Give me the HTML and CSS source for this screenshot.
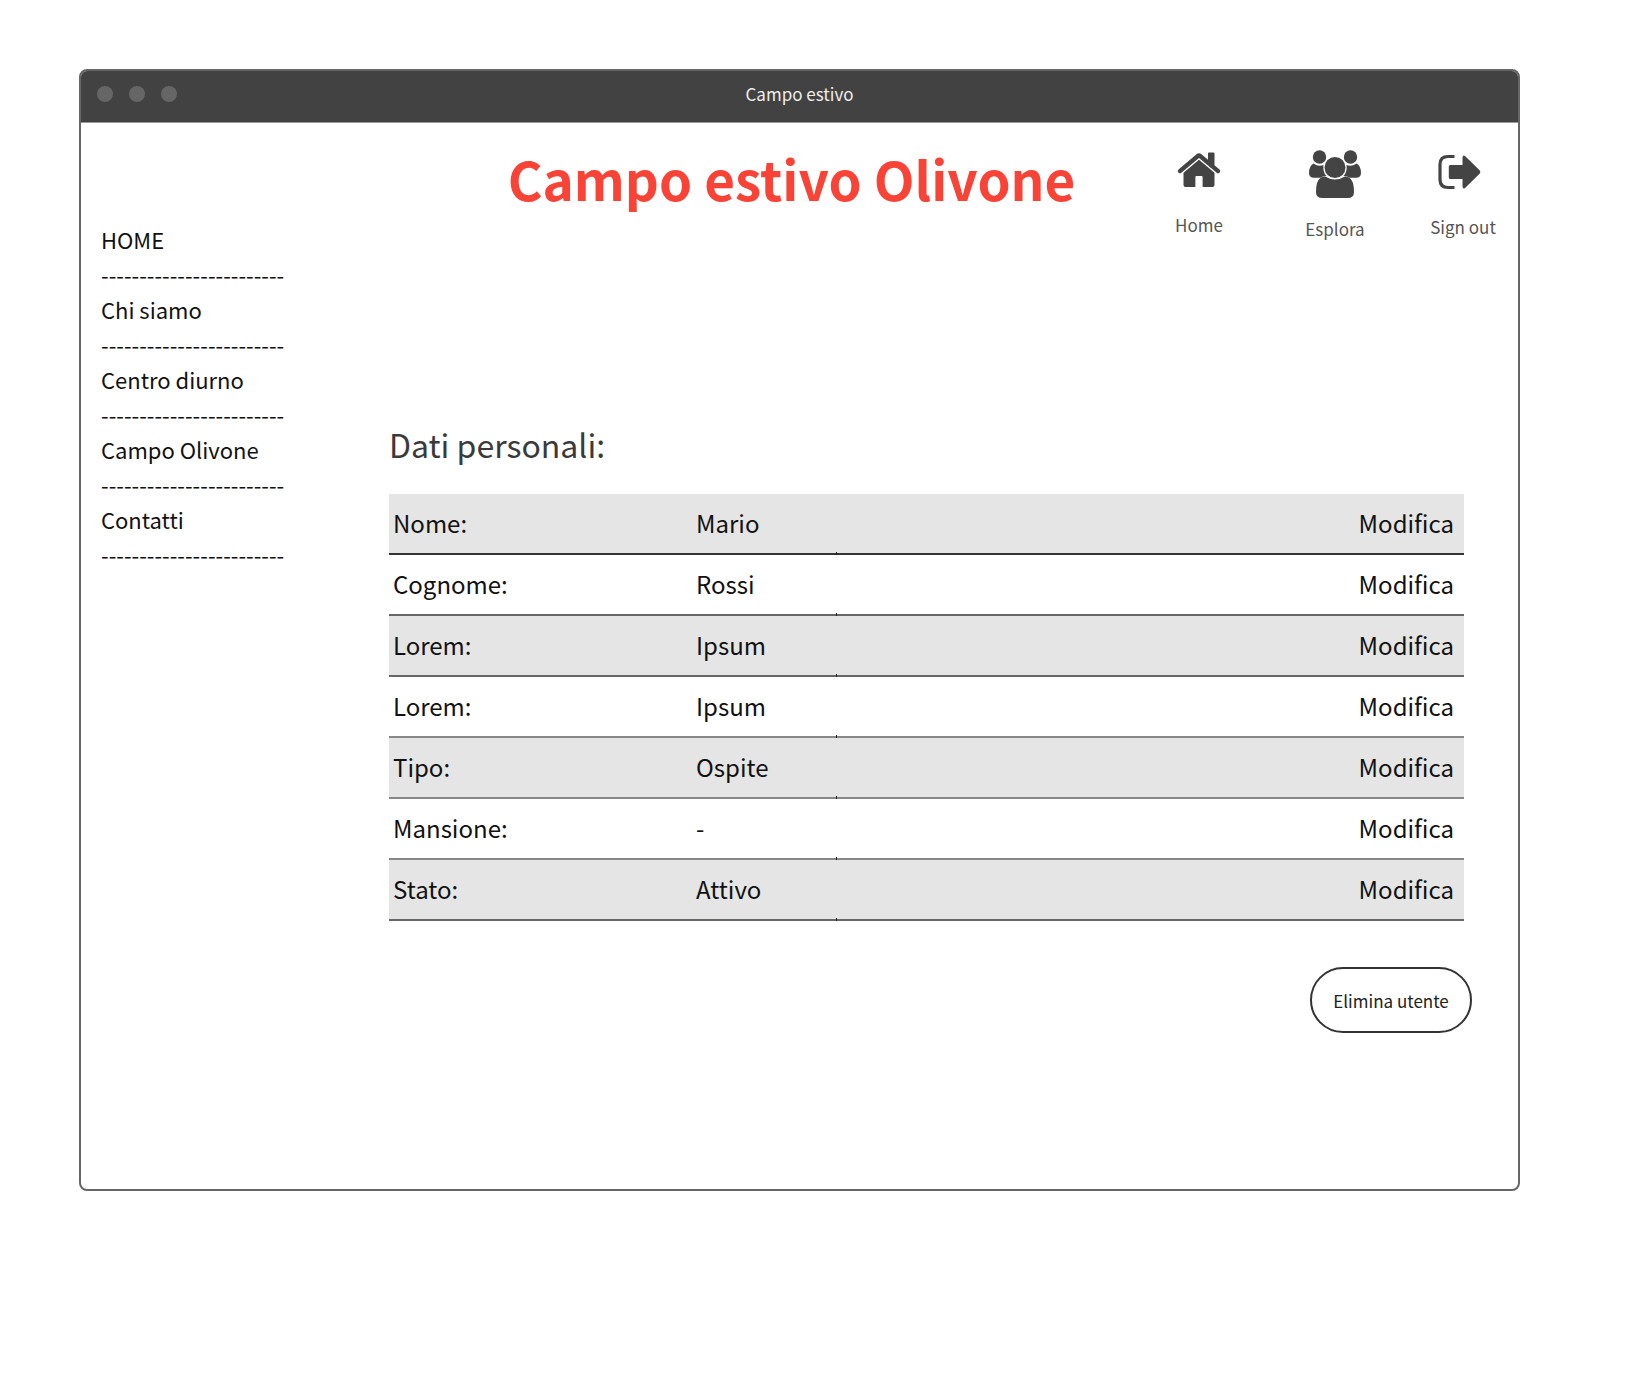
FILE: index.html
```html
<!DOCTYPE html>
<html lang="it">
<head>
<meta charset="utf-8">
<title>Campo estivo</title>
<meta name="viewport" content="width=device-width, initial-scale=1">
<link rel="stylesheet" href="styles.css">
</head>
<body>
<div class="window">
  <div class="titlebar">
    <div class="dots"><span class="dot"></span><span class="dot"></span><span class="dot"></span></div>
    <span class="titlebar-text">Campo estivo</span>
  </div>
  <div class="page">
    <header class="header">
      <h1 class="title">Campo estivo Olivone</h1>
      <nav class="actions">
        <a class="action" href="#">
          <svg width="44" height="44" viewBox="0 0 44 44" fill="#444" aria-hidden="true">
            <path d="M1.500 19.500 19.500 4.300Q22 2.300 24.500 4.300L31 9.800V3.500Q31 2.500 32 2.500H36.500Q37.500 2.500 37.500 3.500V15.200L42.500 19.500Q43.800 20.800 43 22L42 23Q41 23.800 40 23L22 8 4 23Q3 23.800 2 23L1 22Q.3 20.800 1.500 19.500Z"/>
            <path d="M22 9.800 37.500 22.700V35Q37.500 37 35.500 37H25.600V27Q25.600 26 24.600 26H19.400Q18.400 26 18.400 27V37H8.500Q6.500 37 6.500 35V22.700Z"/>
          </svg>
          <span>Home</span>
        </a>
        <a class="action" href="#">
          <svg width="52" height="48" viewBox="0 0 52 48" fill="#444" aria-hidden="true">
            <circle cx="10.500" cy="7" r="6.700"/>
            <circle cx="41.500" cy="7" r="6.700"/>
            <circle cx="26" cy="17.500" r="10.500"/>
            <path d="M4.500 13.500Q9.500 17 14.500 15Q13.500 22 17.500 26Q13.800 25.800 11.500 27.700H5Q0 27.700 0 23Q0 16 4.500 13.500Z"/>
            <path d="M47.500 13.500Q42.500 17 37.500 15Q38.500 22 34.500 26Q38.200 25.800 40.500 27.700H47Q52 27.700 52 23Q52 16 47.500 13.500Z"/>
            <path d="M16 26.500Q26 32.500 36 26.500Q45 26.500 45 42Q45 48 38.500 48H13.500Q7 48 7 42Q7 26.500 16 26.500Z"/>
          </svg>
          <span>Esplora</span>
        </a>
        <a class="action" href="#">
          <svg width="50" height="46" viewBox="6 0 50 46" fill="#444" aria-hidden="true">
            <path d="M22.500 6.500H16Q8 6.500 8 14.500V29.500Q8 37.500 16 37.500H22.500" fill="none" stroke="#444" stroke-width="3.200"/>
            <path d="M18.300 15H30.500V7.500Q31 4.500 33 6L47.800 20.500Q49 22 47.800 23.500L33 38Q31 39.500 30.500 36.500V29H18.300Q16.800 29 16.800 27.500V16.500Q16.800 15 18.300 15Z"/>
          </svg>
          <span>Sign out</span>
        </a>
      </nav>
    </header>
    <div class="columns">
      <nav class="sidebar">
        <a href="#">HOME</a><span aria-hidden="true">------------------------</span>
        <a href="#">Chi siamo</a><span aria-hidden="true">------------------------</span>
        <a href="#">Centro diurno</a><span aria-hidden="true">------------------------</span>
        <a href="#">Campo Olivone</a><span aria-hidden="true">------------------------</span>
        <a href="#">Contatti</a><span aria-hidden="true">------------------------</span>
      </nav>
      <main class="content">
        <h2 class="subtitle">Dati personali:</h2>
        <table class="data">
          <tbody>
            <tr><th scope="row">Nome:</th><td class="value">Mario</td><td class="edit"><a href="#">Modifica</a></td></tr>
            <tr><th scope="row">Cognome:</th><td class="value">Rossi</td><td class="edit"><a href="#">Modifica</a></td></tr>
            <tr><th scope="row">Lorem:</th><td class="value">Ipsum</td><td class="edit"><a href="#">Modifica</a></td></tr>
            <tr><th scope="row">Lorem:</th><td class="value">Ipsum</td><td class="edit"><a href="#">Modifica</a></td></tr>
            <tr><th scope="row">Tipo:</th><td class="value">Ospite</td><td class="edit"><a href="#">Modifica</a></td></tr>
            <tr><th scope="row">Mansione:</th><td class="value">-</td><td class="edit"><a href="#">Modifica</a></td></tr>
            <tr><th scope="row">Stato:</th><td class="value">Attivo</td><td class="edit"><a href="#">Modifica</a></td></tr>
          </tbody>
        </table>
        <button class="delete" type="button">Elimina utente</button>
      </main>
    </div>
  </div>
</div>
</body>
</html>
```
FILE: styles.css
```css
* {
  box-sizing: border-box;
}

body {
  margin: 0;
  padding: 69px 110px 69px 79px;
  background: #fff;
  color: #111;
  font-family: "Noto Sans CJK SC", "Noto Sans", sans-serif;
}

a {
  color: inherit;
  text-decoration: none;
}

.window {
  border: 2px solid #666;
  border-radius: 8px;
  overflow: hidden;
}

.titlebar {
  display: grid;
  grid-template-columns: 1fr auto 1fr;
  align-items: center;
  height: 52px;
  padding: 0 16px 6px;
  border-bottom: 1px solid #999;
  background: #424242;
  color: #eee;
  font-size: 17px;
  line-height: 26px;
}

.dots {
  display: flex;
  gap: 16px;
}

.dot {
  width: 16px;
  height: 16px;
  border-radius: 50%;
  background: #666;
}

.page {
  padding: 27px 22px 156px 20px;
}

.header {
  display: grid;
  grid-template-columns: 1fr auto 1fr;
  align-items: start;
  height: 72px;
}

.title {
  grid-column: 2;
  margin: 0 14px 0 0;
  color: #f94336;
  font-size: 53px;
  font-weight: 700;
  line-height: 56px;
}

.actions {
  display: grid;
  grid-template-columns: 82px 60px 66px;
  justify-content: end;
  align-items: start;
  gap: 65px;
}

.action {
  display: flex;
  flex-direction: column;
  align-items: center;
  gap: 18px;
  color: #555;
  font-size: 17px;
  line-height: 26px;
  white-space: nowrap;
}

.columns {
  display: grid;
  grid-template-columns: 288px 1fr;
}

.sidebar {
  display: flex;
  flex-direction: column;
  font-size: 22px;
  line-height: 35px;
}

.content {
  display: flex;
  flex-direction: column;
  padding: 198px 32px 0 0;
}

.subtitle {
  margin: 0 0 26px;
  color: #3a3a3a;
  font-size: 32px;
  font-weight: 400;
  line-height: 48px;
}

.data {
  width: 100%;
  border-collapse: separate;
  border-spacing: 0;
  table-layout: fixed;
  font-size: 24px;
  line-height: 36px;
}

.data th,
.data td {
  height: 61px;
  padding: 0 0 2px 4px;
  border-bottom: 2px solid #666;
  font-weight: 400;
  text-align: left;
}

.data th {
  width: 303px;
}

.data tr:nth-child(odd) {
  background: #e5e5e5;
}

.data tr:first-child > * {
  border-bottom-color: #333;
}

.data tr:nth-child(n + 4):nth-child(-n + 6) > * {
  border-bottom-color: #888;
}

.data .value {
  position: relative;
}

.data .value::after {
  content: "";
  position: absolute;
  left: 144px;
  bottom: -2px;
  width: 1px;
  height: 3px;
  background: #222;
}

.data .edit {
  padding: 0 10px 2px 0;
  text-align: right;
}

.delete {
  align-self: flex-end;
  width: 162px;
  height: 66px;
  margin: 46px -8px 0 0;
  padding: 0;
  border: 2px solid #333;
  border-radius: 33px;
  background: #fff;
  color: #222;
  font: inherit;
  font-size: 17px;
}
```
